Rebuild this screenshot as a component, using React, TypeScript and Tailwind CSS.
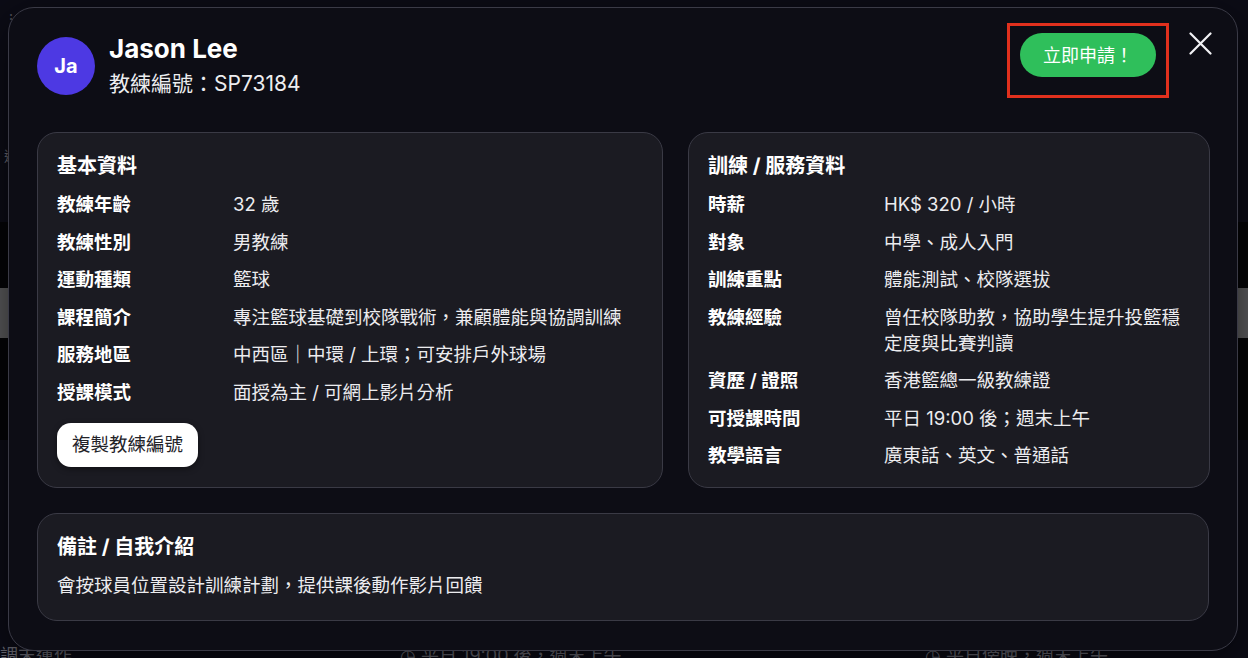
import React from 'react';

const font = { fontFamily: 'Inter, "Noto Sans CJK TC", sans-serif' };

const basic: [string, string][] = [
  ['教練年齡', '32 歲'],
  ['教練性別', '男教練'],
  ['運動種類', '籃球'],
  ['課程簡介', '專注籃球基礎到校隊戰術，兼顧體能與協調訓練'],
  ['服務地區', '中西區｜中環 / 上環；可安排戶外球場'],
  ['授課模式', '面授為主 / 可網上影片分析'],
];

const service: [string, string][] = [
  ['時薪', 'HK$ 320 / 小時'],
  ['對象', '中學、成人入門'],
  ['訓練重點', '體能測試、校隊選拔'],
  ['教練經驗', '曾任校隊助教，協助學生提升投籃穩定度與比賽判讀'],
  ['資歷 / 證照', '香港籃總一級教練證'],
  ['可授課時間', '平日 19:00 後；週末上午'],
  ['教學語言', '廣東話、英文、普通話'],
];

function Rows({ rows }: { rows: [string, string][] }) {
  return (
    <div className="grid grid-cols-[176px_1fr] gap-y-[11.5px] text-[18.5px] leading-[26px]">
      {rows.map(([k, v]) => (
        <React.Fragment key={k}>
          <div className="font-semibold text-white">{k}</div>
          <div className="text-[#ececef]">{v}</div>
        </React.Fragment>
      ))}
    </div>
  );
}

function Card({ title, children, className = '' }: { title: string; children: React.ReactNode; className?: string }) {
  return (
    <div className={`shrink-0 rounded-[20px] border border-[#3a3a45] bg-[#1b1b22] px-[19px] pt-[20px] ${className}`}>
      <div className="mb-[12px] text-[20px] font-bold leading-[26px] text-white">{title}</div>
      {children}
    </div>
  );
}

function Backdrop() {
  return (
    <div className="flex h-[658px] flex-col text-[#6b6b75]">
      <div className="flex h-[222px] flex-col justify-between bg-[#0c0c16] px-1 pt-2 pb-[56px] text-[14px]">
        <span className="text-[#55555f]">⋮</span>
        <span>選</span>
      </div>
      <div className="h-[66px] bg-[#050507]" />
      <div className="h-[50px] bg-[#5c5c5e]" />
      <div className="h-[102px] bg-[#050507]" />
      <div className="flex flex-1 flex-col justify-end bg-[#0c0c16]">
        <div className="flex translate-y-[6px] items-center text-[18px] leading-[16px]">
          <span className="w-[400px]">調末運作</span>
          <span className="w-[525px]">◷ 平日 19:00 後，週末上午</span>
          <span>◷ 平日傍晚，週末上午</span>
        </div>
      </div>
    </div>
  );
}

export default function App() {
  return (
    <div className="relative h-[658px] w-[1248px] overflow-hidden bg-[#0a0a12]" style={font}>
      <Backdrop />
      <div className="absolute left-[8px] top-[7px] flex h-[644px] w-[1230px] flex-col rounded-[26px] border border-[#3a3a46] bg-[#0d0d15] px-[28px] pt-[25px] shadow-[0_10px_40px_rgba(0,0,0,0.6)]">
        <div className="flex h-[65px] shrink-0 items-start justify-between">
          <div className="flex h-[65px] items-center gap-[14px]">
            <div className="flex h-[58px] w-[58px] items-center justify-center rounded-full bg-[#4d39e3] text-[20px] font-bold text-white">
              Ja
            </div>
            <div className="flex flex-col">
              <div className="text-[26px] font-bold leading-[32px] text-white">Jason Lee</div>
              <div className="mt-[5px] text-[21px] leading-[28px] text-[#ededf0]">教練編號：SP73184</div>
            </div>
          </div>
          <div className="-mt-[10px] flex items-start gap-[20px]">
            <div className="h-[75px] w-[162px] border-[3px] border-[#e1301d] pl-[10px] pt-[7px]">
              <button className="flex h-[44px] w-[136px] items-center justify-center rounded-full bg-[#2fbf5b] text-[18px] text-white">
                立即申請！
              </button>
            </div>
            <svg width="23" height="23" viewBox="0 0 23 23" className="mt-[9px] -mr-[3px]">
              <path d="M1.5 1.5 L21.5 21.5 M21.5 1.5 L1.5 21.5" stroke="#f2f2f5" strokeWidth="2.2" strokeLinecap="round" />
            </svg>
          </div>
        </div>

        <div className="mt-[34px] grid shrink-0 grid-cols-[626px_522px] gap-[25px]">
          <Card title="基本資料" className="pb-[20px]">
            <Rows rows={basic} />
            <button className="mt-[18px] h-[44px] rounded-[14px] bg-white px-[15px] text-[18.5px] text-[#222228] shadow-[0_2px_6px_rgba(0,0,0,0.4)]">
              複製教練編號
            </button>
          </Card>
          <Card title="訓練 / 服務資料" className="pb-[19px]">
            <Rows rows={service} />
          </Card>
        </div>

        <Card title="備註 / 自我介紹" className="mt-[25px] pb-[22px]">
          <div className="mt-[8px] text-[18.5px] leading-[26px] text-[#ececef]">
            會按球員位置設計訓練計劃，提供課後動作影片回饋
          </div>
        </Card>
      </div>
    </div>
  );
}
